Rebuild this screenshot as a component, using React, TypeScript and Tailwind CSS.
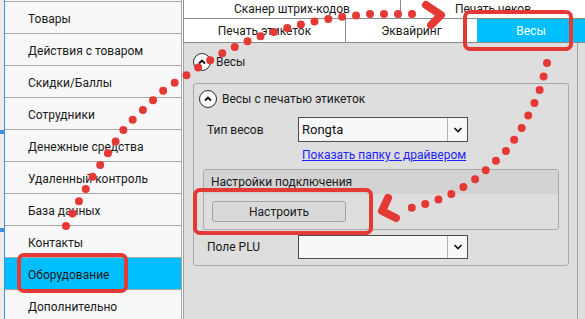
import React from "react";

const items = [
  "Товары",
  "Действия с товаром",
  "Скидки/Баллы",
  "Сотрудники",
  "Денежные средства",
  "Удаленный контроль",
  "База данных",
  "Контакты",
  "Оборудование",
  "Дополнительно",
];

function Expander() {
  return (
    <div className="w-[18px] h-[18px] rounded-full border-[1.5px] border-[#2b2b2b] bg-white flex items-center justify-center">
      <svg width="10" height="10" viewBox="0 0 10 10">
        <path d="M2 6.5 L5 3.5 L8 6.5" fill="none" stroke="#111" strokeWidth="1.8" />
      </svg>
    </div>
  );
}

function Select({ value, h }: { value: string; h: string }) {
  return (
    <div className={`w-[170px] ${h} border border-[#4d4d4d] bg-[#f8f8f8] flex`}>
      <div className="flex-1 pl-[3px] flex items-center text-[13px] text-[#111]">{value}</div>
      <div className="w-[20px] border-l border-[#b4b4b4] flex items-center justify-center">
        <svg width="10" height="8" viewBox="0 0 10 8">
          <path d="M1.5 2 L5 5.5 L8.5 2" fill="none" stroke="#111" strokeWidth="1.6" />
        </svg>
      </div>
    </div>
  );
}

export default function App() {
  return (
    <div
      className="relative w-[585px] h-[319px] overflow-hidden flex bg-white text-[12px] text-[#1a1a1a]"
      style={{ fontFamily: 'Roboto, "Noto Sans", sans-serif' }}
    >
      {/* left strip */}
      <div className="w-[5px] bg-[#ececec] border-r border-[#3d8fe0] flex flex-col">
        <div className="h-[130px]" />
        <div className="h-[4px] bg-[#3d8fe0]" />
        <div className="h-[94px]" />
        <div className="h-[4px] bg-[#3d8fe0]" />
      </div>

      {/* sidebar */}
      <div className="w-[177px] bg-[#f8f8f8] border-r border-[#a6a6a6] pt-[1px] flex flex-col">
        {items.map((it) => (
          <div
            key={it}
            className={
              "h-[32px] shrink-0 border-t border-[#a6a6a6] pl-[23px] pt-[2px] flex items-center " +
              (it === "Оборудование" ? "bg-[#00bfff]" : "")
            }
          >
            {it}
          </div>
        ))}
      </div>

      {/* right */}
      <div className="flex-1 pl-[1px] flex flex-col">
        <div className="flex h-[19px] border-b border-l border-[#8c8c8c]">
          <div className="w-[217px] border-r border-[#8c8c8c] flex items-center justify-center">Сканер штрих-кодов</div>
          <div className="flex-1 flex items-center justify-center">Печать чеков</div>
        </div>
        <div className="flex h-[24px] border-b border-l border-[#8c8c8c]">
          <div className="w-[162px] border-r border-[#8c8c8c] flex items-center justify-center">Печать этикеток</div>
          <div className="w-[131px] flex items-center justify-center">Эквайринг</div>
          <div className="flex-1 bg-[#00bfff] text-white flex items-center justify-center">Весы</div>
        </div>

        <div className="flex-1 bg-[#dedede] flex">
          <div className="w-[395px] border-l border-r border-[#a0a0a0] pl-[9px] pt-[10px] pr-[8px]">
            <div className="flex items-center gap-[5px] h-[18px]">
              <Expander />
              <span>Весы</span>
            </div>

            <div className="mt-[12px] border border-[#a9a9a9] rounded-[3px] pt-[6px] pb-[6px]">
              <div className="pl-[5px] flex items-center gap-[5px] h-[18px]">
                <Expander />
                <span>Весы с печатью этикеток</span>
              </div>

              <div className="mt-[9px] pl-[13px] flex items-center">
                <div className="w-[91px]">Тип весов</div>
                <Select value="Rongta" h="h-[25px]" />
              </div>

              <div className="mt-[4px] pl-[108px] h-[18px] flex items-center">
                <span className="text-[#1d1dff] underline">Показать папку с драйвером</span>
              </div>

              <div className="mt-[5px] mx-[9px] border border-[#a9a9a9] rounded-[3px] overflow-hidden">
                <div className="h-[24px] bg-[#d3d3d3] pl-[7px] flex items-center">Настройки подключения</div>
                <div className="pl-[8px] pt-[7px] pb-[7px]">
                  <div className="w-[134px] h-[21px] bg-[#d9d9d9] border border-[#a3a3a3] rounded-[3px] flex items-center justify-center">
                    Настроить
                  </div>
                </div>
              </div>

              <div className="mt-[5px] pl-[13px] flex items-center">
                <div className="w-[91px]">Поле PLU</div>
                <Select value="" h="h-[24px]" />
              </div>
            </div>
          </div>
        </div>
      </div>

      {/* annotations */}
      <svg className="absolute inset-0 pointer-events-none" width="585" height="319" viewBox="0 0 585 319">
        <g fill="none" stroke="#e53935" strokeLinecap="round" strokeLinejoin="round">
          <rect x="19" y="255" width="107" height="36" rx="5" strokeWidth="4" />
          <rect x="465" y="12" width="106" height="37" rx="5" strokeWidth="4" />
          <rect x="195" y="190" width="176" height="43" rx="5" strokeWidth="4" />
          <path
            d="M66 226 L79 201 L93 176 L110 150 L126 126 L145 108 L165 89 L190 73 L202 65 L228 50 L255 38 L283 29 L311 22 L340 17 L370 14 L413 14"
            strokeWidth="8"
            strokeDasharray="0 14"
          />
          <path d="M426 5 L441 15 L431 25" strokeWidth="8" />
          <path
            d="M547 63 L543 79 L539 92 L534 104 L527 118 L520 131 L512 143 L503 155 L493 163 L483 173 L473 181 L460 189 L448 196 L434 201 L420 206 L406 209"
            strokeWidth="8"
            strokeDasharray="0 14"
          />
          <path d="M388 198 L382 211 L396 218" strokeWidth="8" />
        </g>
      </svg>
    </div>
  );
}
